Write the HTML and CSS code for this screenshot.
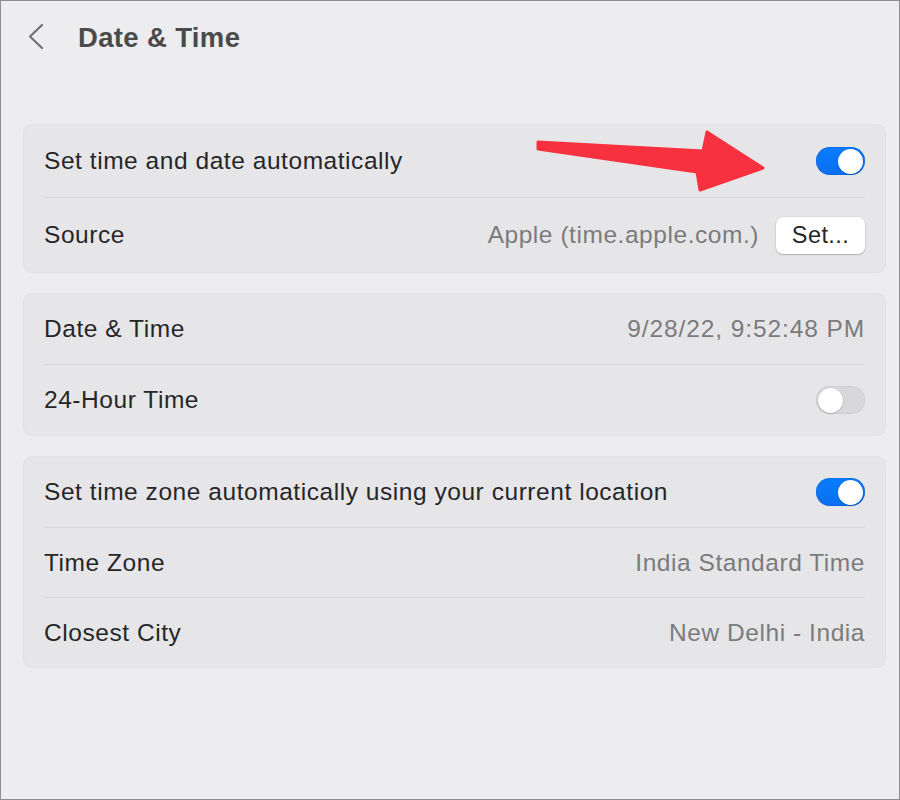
FILE: index.html
```html
<!DOCTYPE html>
<html lang="en">
<head>
<meta charset="utf-8">
<title>Date &amp; Time</title>
<link rel="stylesheet" href="styles.css">
</head>
<body>
<div class="window">
  <header class="header">
    <svg class="back" width="18" height="28" viewBox="0 0 18 28" aria-hidden="true">
      <path d="M15 2 L3 13.5 L15 25" fill="none" stroke="#717173" stroke-width="2.2" stroke-linecap="round" stroke-linejoin="round"/>
    </svg>
    <h1 class="title">Date &amp; Time</h1>
  </header>

  <main class="content">
    <section class="card">
      <div class="row row-a">
        <span class="label">Set time and date automatically</span>
        <span class="toggle on"><span class="knob"></span></span>
      </div>
      <div class="divider"></div>
      <div class="row row-b">
        <span class="label">Source</span>
        <span class="right">
          <span class="value">Apple (time.apple.com.)</span>
          <span class="btn">Set...</span>
        </span>
      </div>
    </section>

    <section class="card">
      <div class="row row-c">
        <span class="label">Date &amp; Time</span>
        <span class="value num">9/28/22, 9:52:48 PM</span>
      </div>
      <div class="divider"></div>
      <div class="row row-c">
        <span class="label">24-Hour Time</span>
        <span class="toggle off"><span class="knob"></span></span>
      </div>
    </section>

    <section class="card">
      <div class="row row-c">
        <span class="label">Set time zone automatically using your current location</span>
        <span class="toggle on"><span class="knob"></span></span>
      </div>
      <div class="divider"></div>
      <div class="row row-d">
        <span class="label">Time Zone</span>
        <span class="value">India Standard Time</span>
      </div>
      <div class="divider"></div>
      <div class="row row-d">
        <span class="label">Closest City</span>
        <span class="value">New Delhi - India</span>
      </div>
    </section>
  </main>

  <svg class="arrow" width="900" height="800" viewBox="0 0 900 800" aria-hidden="true">
    <polygon points="538,142 703,151 707,132 763,168 700,190 697,172 538,149" fill="#f7313f" stroke="#f7313f" stroke-width="3" stroke-linejoin="round"/>
  </svg>
</div>
</body>
</html>
```

FILE: styles.css
```css
* { box-sizing: border-box; }

html, body {
  margin: 0;
  padding: 0;
  background: #ededef;
}

.window {
  position: relative;
  width: 900px;
  height: 800px;
  border: 1px solid #8e8e90;
  background: #ededef;
  font-family: "Liberation Sans", Arial, Helvetica, sans-serif;
  padding: 0 13px 0 22px;
}

.header {
  height: 73px;
  display: flex;
  align-items: center;
}

.back {
  margin-left: 4px;
  margin-top: -1px;
}

.title {
  margin: 0 0 0 33px;
  font-size: 27.5px;
  font-weight: 700;
  color: #4a4a4c;
  letter-spacing: 0.35px;
}

.content {
  margin-top: 50px;
  display: flex;
  flex-direction: column;
  gap: 20px;
}

.card {
  background: #e6e6e8;
  border: 1px solid #e1e1e3;
  border-radius: 9px;
  padding: 0 20px;
}

.row {
  height: 70px;
  display: flex;
  align-items: center;
  justify-content: space-between;
  font-size: 24.5px;
  letter-spacing: 0.55px;
}

.row-a { height: 72px; }
.row-b { height: 74px; }
.row-c { height: 70px; }
.row-d { height: 69px; }

.label {
  color: #262628;
}

.value {
  color: #7b7b7d;
}

.value.num {
  letter-spacing: 0.9px;
}

.right {
  display: flex;
  align-items: center;
  gap: 17px;
}

.divider {
  height: 1px;
  background: #d8d8da;
}

.btn {
  width: 89px;
  height: 37px;
  border-radius: 7px;
  background: #ffffff;
  box-shadow: 0 1px 1.5px rgba(0, 0, 0, 0.22), 0 0 0 0.5px rgba(0, 0, 0, 0.08);
  color: #262628;
  display: flex;
  align-items: center;
  justify-content: center;
  font-size: 23.5px;
  letter-spacing: 0.4px;
}

.toggle {
  width: 49px;
  height: 28px;
  border-radius: 14px;
  display: flex;
  align-items: center;
  padding: 0 2px;
  flex: none;
}

.toggle.on {
  background: linear-gradient(#0a7cff, #0a6ff0);
  justify-content: flex-end;
  box-shadow: inset 0 0 0 0.5px rgba(0, 50, 140, 0.3);
}

.toggle.off {
  background: #d8d8da;
  justify-content: flex-start;
  box-shadow: inset 0 0 0 0.5px rgba(0, 0, 0, 0.08);
}

.knob {
  width: 25px;
  height: 25px;
  border-radius: 50%;
  background: #ffffff;
  box-shadow: 0 0.5px 1.5px rgba(0, 0, 0, 0.3);
}

.arrow {
  position: absolute;
  left: -1px;
  top: -1px;
  pointer-events: none;
}
```
